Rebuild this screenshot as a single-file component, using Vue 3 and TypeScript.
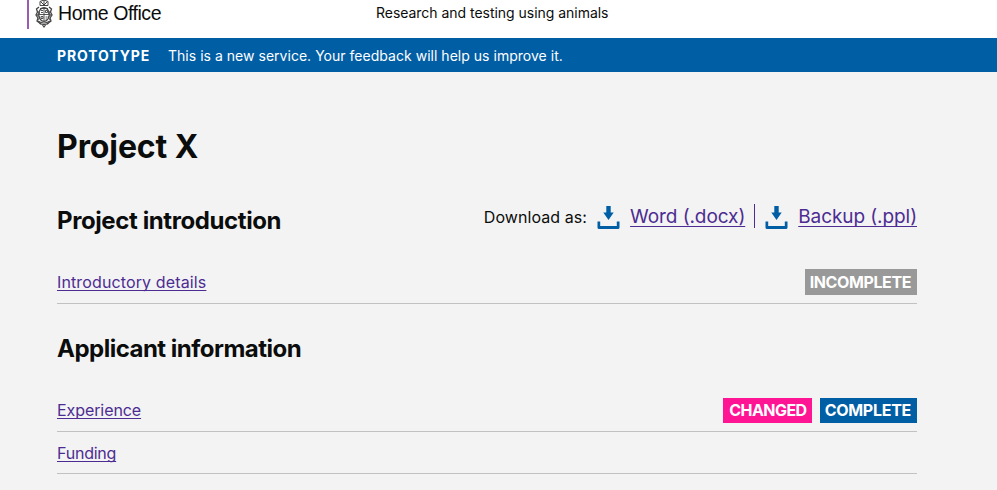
<script setup lang="ts">
interface Tag {
  label: string
  kind: 'incomplete' | 'changed' | 'complete'
}
interface Item {
  title: string
  spacing: 'wide' | 'narrow' | 'tight'
  tags: Tag[]
}

const introduction: Item[] = [
  { title: 'Introductory details', spacing: 'wide', tags: [{ label: 'INCOMPLETE', kind: 'incomplete' }] },
]
const applicant: Item[] = [
  {
    title: 'Experience',
    spacing: 'narrow',
    tags: [
      { label: 'CHANGED', kind: 'changed' },
      { label: 'COMPLETE', kind: 'complete' },
    ],
  },
  { title: 'Funding', spacing: 'tight', tags: [] },
]
const downloads: string[] = ['Word (.docx)', 'Backup (.ppl)']
</script>

<template>
  <div class="page">
    <header class="header">
      <div class="brand">
        <svg class="crest" width="18" height="28" viewBox="0 0 18 28" fill="none" stroke="#444">
          <path d="M5 1.500q4-3 8 0v4H5zM6 2l3 3 3-3M9 0v5M5 5.500h8" stroke-width="1" />
          <path d="M4 7L1.500 9l1 3L1 15l2 3-1 3 4 3M14 7l2.500 2-1 3L17 15l-2 3 1 3-4 3" stroke-width="1.300" />
          <path d="M2 11l3 2-3 2 3 2-2 3M16 11l-3 2 3 2-3 2 2 3" stroke-width=".8" />
          <ellipse cx="9" cy="14.500" rx="5.300" ry="6.800" stroke-width="1.200" />
          <path d="M9 8v13M4 14.500h10M6 10.500h2M6 12.500h2M10.500 10.500h2v2h-2zM6 16.500h2v2H6zM10.500 17h2M10.500 19h1.500M5 8.500h8" stroke-width=".9" />
          <path d="M3 21q6 4 12 0M4.500 23.500q4.500 2 9 0M7.500 25l1.500 2 1.500-2" stroke-width="1.200" />
        </svg>
        <span class="brand-name">Home Office</span>
      </div>
      <span class="service">Research and testing using animals</span>
    </header>

    <div class="banner">
      <strong class="phase">PROTOTYPE</strong>
      <span class="feedback">This is a new service. Your feedback will help us improve it.</span>
    </div>

    <main class="main">
      <h1>Project X</h1>

      <div class="section-head">
        <h2>Project introduction</h2>
        <div class="downloads">
          <span class="downloads-label">Download as:</span>
          <span v-for="name in downloads" :key="name" class="download">
            <svg width="23" height="24" viewBox="0 0 23 24" fill="#005ea5">
              <path d="M9.300 0h4.400v6.500h3l-5.200 7.500-5.200-7.500h3z" />
              <path d="M.5 15.500h2.700v4.500h16.600v-4.500h2.700V21.500q0 1.500-1.500 1.500H2q-1.500 0-1.500-1.500z" />
            </svg>
            <a>{{ name }}</a>
          </span>
        </div>
      </div>
      <ul class="introduction-list">
        <li v-for="item in introduction" :key="item.title">
          <a :class="item.spacing">{{ item.title }}</a>
          <span class="tags">
            <span v-for="tag in item.tags" :key="tag.label" class="tag" :class="tag.kind">{{ tag.label }}</span>
          </span>
        </li>
      </ul>

      <h2 class="applicant-heading">Applicant information</h2>
      <ul class="applicant-list">
        <li v-for="item in applicant" :key="item.title">
          <a :class="item.spacing">{{ item.title }}</a>
          <span class="tags">
            <span v-for="tag in item.tags" :key="tag.label" class="tag" :class="tag.kind">{{ tag.label }}</span>
          </span>
        </li>
      </ul>
    </main>
  </div>
</template>

<style>
body {
  background: #f3f3f3;
}
</style>

<style scoped>
.page {
  height: 490px;
  overflow: hidden;
  background: #f3f3f3;
  color: #0b0c0c;
  font-family: Inter, sans-serif;
  font-size: 16px;
  line-height: 25px;
}
.header {
  display: flex;
  height: 38px;
  background: #fff;
}
.brand {
  display: flex;
  box-sizing: border-box;
  width: 349px;
  height: 29px;
  margin-left: 27px;
  border-left: 2px solid #9b5bb5;
  padding-left: 6px;
}
.crest {
  flex: none;
}
.brand-name {
  margin-left: 5px;
  font-family: "Liberation Sans", sans-serif;
  font-size: 19.500px;
  letter-spacing: -0.450px;
  line-height: 26px;
}
.service {
  font-size: 14px;
  letter-spacing: -0.030px;
  line-height: 26px;
}
.banner {
  display: flex;
  align-items: center;
  height: 34px;
  padding: 1px 57px 0;
  box-sizing: border-box;
  background: #005ea5;
  color: #fff;
  font-size: 14px;
}
.phase {
  width: 111px;
  font-weight: 700;
  letter-spacing: 0.900px;
}
.feedback {
  letter-spacing: 0.025px;
}
.main {
  width: 860px;
  margin-left: 57px;
  padding-top: 55px;
}
h1,
h2,
ul {
  margin: 0;
  padding: 0;
}
h1 {
  font-size: 32px;
  font-weight: 650;
  letter-spacing: -0.100px;
  line-height: 40px;
}
h2 {
  font-size: 24px;
  font-weight: 650;
  letter-spacing: -0.400px;
  line-height: 30px;
}
.section-head {
  display: flex;
  justify-content: space-between;
  height: 95px;
  padding-top: 39px;
  box-sizing: border-box;
}
.downloads {
  display: flex;
  height: 24px;
  margin-top: -2px;
}
.downloads-label {
  margin-right: 10px;
  letter-spacing: 0.080px;
  line-height: 26px;
}
.download {
  display: flex;
  font-size: 19px;
  letter-spacing: -0.080px;
  line-height: 25px;
}
.download a {
  text-underline-offset: 3px;
}
.download svg {
  margin: 2px 10px 0 0;
}
.download + .download {
  margin-left: 9px;
  border-left: 1px solid #4c2c92;
  padding-left: 10px;
}
a {
  color: #4c2c92;
  text-decoration: underline;
  text-decoration-thickness: 1px;
  text-decoration-skip-ink: none;
  text-underline-offset: 2px;
}
.wide {
  letter-spacing: 0.130px;
}
.narrow {
  letter-spacing: -0.080px;
}
.tight {
  padding-top: 1px;
  letter-spacing: -0.230px;
}
li {
  display: flex;
  justify-content: space-between;
  box-sizing: border-box;
  height: 42px;
  padding-top: 8px;
  border-bottom: 1px solid #bfc1c3;
  list-style: none;
}
.introduction-list li {
  padding-top: 7px;
}
.introduction-list a {
  padding-top: 1px;
}
.tags {
  display: flex;
  gap: 8px;
}
.tag {
  height: 25px;
  padding: 0 6px 0 5px;
  color: #fff;
  font-weight: 650;
  letter-spacing: -0.280px;
}
.incomplete {
  height: 26px;
  line-height: 27px;
  letter-spacing: -0.400px;
  background: #999;
}
.changed {
  padding-left: 6px;
  padding-right: 5px;
  letter-spacing: -0.550px;
  background: #ff1493;
}
.complete {
  background: #005ea5;
}
.applicant-heading {
  padding-top: 30px;
  letter-spacing: -0.510px;
}
.applicant-list {
  padding-top: 26px;
}
</style>
